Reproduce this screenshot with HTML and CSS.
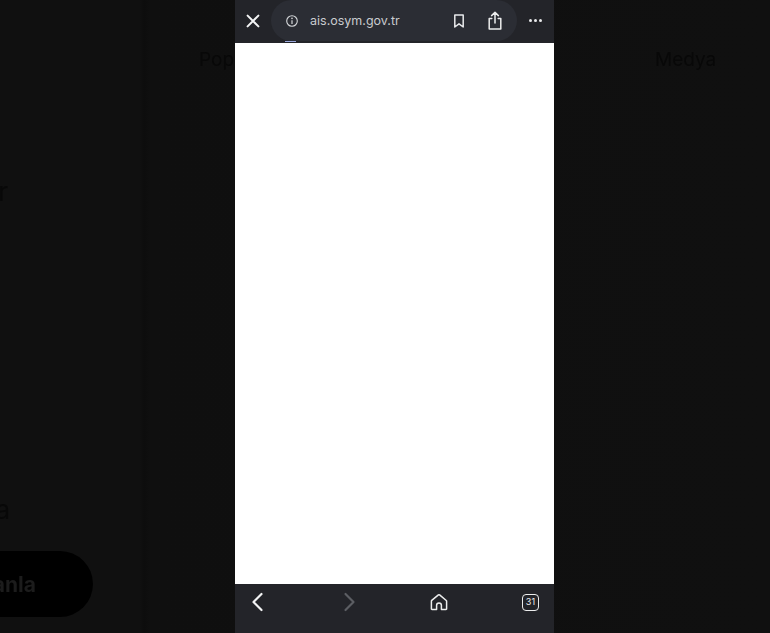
FILE: index.html
```html
<!DOCTYPE html>
<html lang="tr">
<head>
  <meta charset="UTF-8">
  <meta name="viewport" content="width=device-width, initial-scale=1.0">
  <title>ais.osym.gov.tr</title>
  <link rel="stylesheet" href="styles.css">
</head>
<body>
  <!-- dimmed page behind the browser sheet -->
  <div class="backdrop">
    <div class="nav-row">
      <span class="nav-popular">Popüler</span>
      <span>Medya</span>
    </div>
    <div class="hero-line hero-line-1"><span>Başvur</span></div>
    <div class="hero-line hero-line-2"><span>Sağlanmışa</span></div>
    <div class="cta"><span>Başlanla</span></div>
  </div>

  <div class="phone">
    <div class="top-bar">
      <button class="icon-btn close-btn" aria-label="Kapat">
        <svg viewBox="0 0 20 20" width="20" height="20"><path d="M4.6 4.6 15.4 15.4M15.4 4.6 4.6 15.4" stroke="#f4f5f6" stroke-width="2" stroke-linecap="round" fill="none"/></svg>
      </button>
      <div class="url-pill">
        <svg class="info-icon" viewBox="0 0 14 14" width="14" height="14"><circle cx="7" cy="7" r="5.3" stroke="#d5d7da" stroke-width="1.1" fill="none"/><path d="M7 6.3V10" stroke="#d5d7da" stroke-width="1.2" fill="none"/><circle cx="7" cy="4.4" r=".8" fill="#d5d7da"/></svg>
        <span class="url-text">ais.osym.gov.tr</span>
        <svg class="bookmark-icon" viewBox="0 0 14 16" width="14" height="16"><path d="M2.8 2h8.4v12L7 10.8 2.8 14z" stroke="#e8e9eb" stroke-width="1.5" stroke-linejoin="round" fill="none"/></svg>
        <svg class="share-icon" viewBox="0 0 18 20" width="18" height="20"><path d="M5.8 7.5H3.2v10.6h11.6V7.5h-2.6M9 12V1.6M5.6 4.6 9 1.4l3.4 3.2" stroke="#eceded" stroke-width="1.5" stroke-linecap="round" stroke-linejoin="round" fill="none"/></svg>
      </div>
      <div class="dots"><i></i><i></i><i></i></div>
      <div class="progress"></div>
    </div>

    <div class="page"></div>

    <div class="bottom-bar">
      <button class="icon-btn" aria-label="Geri">
        <svg viewBox="0 0 24 24" width="24" height="24"><path d="M15.5 4 7.5 12l8 8" stroke="#f2f3f4" stroke-width="2.2" stroke-linecap="round" stroke-linejoin="round" fill="none"/></svg>
      </button>
      <button class="icon-btn" aria-label="İleri">
        <svg viewBox="0 0 24 24" width="24" height="24"><path d="M8.5 4l8 8-8 8" stroke="#5c5e63" stroke-width="2.2" stroke-linecap="round" stroke-linejoin="round" fill="none"/></svg>
      </button>
      <button class="icon-btn" aria-label="Ana sayfa">
        <svg viewBox="0 0 24 24" width="24" height="24"><path d="M5 19.5h4.6v-4.2a2.4 2.4 0 0 1 4.8 0v4.2H19a.6.6 0 0 0 .6-.6v-7.7a1 1 0 0 0-.35-.75L12.6 4.9a1 1 0 0 0-1.2 0L4.75 10.45a1 1 0 0 0-.35.75v7.7a.6.6 0 0 0 .6.6z" stroke="#eceded" stroke-width="1.5" stroke-linejoin="round" fill="none"/></svg>
      </button>
      <div class="tabs-count">31</div>
    </div>
  </div>
</body>
</html>
```

FILE: styles.css
```css
html, body {
  height: 100%;
}
body {
  margin: 0;
  overflow: hidden;
  background: linear-gradient(90deg, #101010 0, #101010 140px, #0d0d0d 144px, #0f0f0f 150px, #101010 100%);
  font-family: Inter, "Liberation Sans", sans-serif;
  display: flex;
  padding-left: 235px;
  box-sizing: border-box;
}
.backdrop {
  position: absolute;
  inset: 0;
  overflow: hidden;
  color: #080808;
  filter: blur(0.6px);
}
.nav-row {
  display: flex;
  padding: 48px 0 0 199px;
  font-size: 19px;
  line-height: 24px;
}
.nav-popular {
  width: 456px;
}
.hero-line {
  width: 8px;
  display: flex;
  justify-content: flex-end;
  white-space: nowrap;
  font-size: 26px;
  line-height: 30px;
}
.hero-line-1 {
  margin-top: 105px;
}
.hero-line-2 {
  width: 10px;
  margin-top: 288px;
}
.cta {
  width: 93px;
  height: 66px;
  margin-top: 26px;
  background: #000;
  border-radius: 0 33px 33px 0;
  display: flex;
  align-items: center;
  justify-content: flex-end;
  padding-right: 57px;
  box-sizing: border-box;
  white-space: nowrap;
  font-size: 21px;
  font-weight: 700;
  color: #1c1c1c;
}
.phone {
  position: relative;
  width: 319px;
  height: 633px;
  display: flex;
  flex-direction: column;
}
.top-bar {
  position: relative;
  height: 43px;
  flex: none;
  background: #232429;
  display: flex;
  align-items: flex-start;
  padding-left: 8px;
  box-sizing: border-box;
}
.icon-btn {
  width: 24px;
  height: 24px;
  padding: 0;
  border: 0;
  background: none;
  display: flex;
  align-items: center;
  justify-content: center;
}
.close-btn {
  width: 20px;
  height: 41px;
}
.url-pill {
  width: 246px;
  height: 41px;
  margin-left: 8px;
  background: #2b2d34;
  border-radius: 21px;
  display: flex;
  align-items: center;
  padding-left: 14px;
  box-sizing: border-box;
  color: #c9cbcf;
  flex: none;
}
.url-text {
  margin-left: 11px;
  font-size: 12.5px;
  width: 133px;
  white-space: nowrap;
}
.bookmark-icon {
  margin-left: 9px;
}
.share-icon {
  margin-left: 20px;
  margin-top: 1px;
}
.dots {
  display: flex;
  gap: 2px;
  margin: 19px 0 0 12px;
}
.dots i {
  width: 3px;
  height: 3px;
  border-radius: 50%;
  background: #e8e9eb;
}
/* load progress, sits on the bottom edge of the bar */
.progress {
  position: absolute;
  left: 50px;
  bottom: 1px;
  width: 11px;
  height: 1px;
  background: #9aa8dc;
}
.page {
  flex: 1;
  background: #fff;
}
.bottom-bar {
  height: 49px;
  flex: none;
  background: #232429;
  display: flex;
  justify-content: space-between;
  align-items: flex-start;
  padding: 6px 11px 0;
  box-sizing: border-box;
}
.tabs-count {
  width: 17px;
  height: 17px;
  margin: 4px 4px 0;
  border: 1.5px solid #eceded;
  border-radius: 4px;
  box-sizing: border-box;
  color: #eceded;
  font-size: 9px;
  line-height: 14px;
  text-align: center;
}
```
